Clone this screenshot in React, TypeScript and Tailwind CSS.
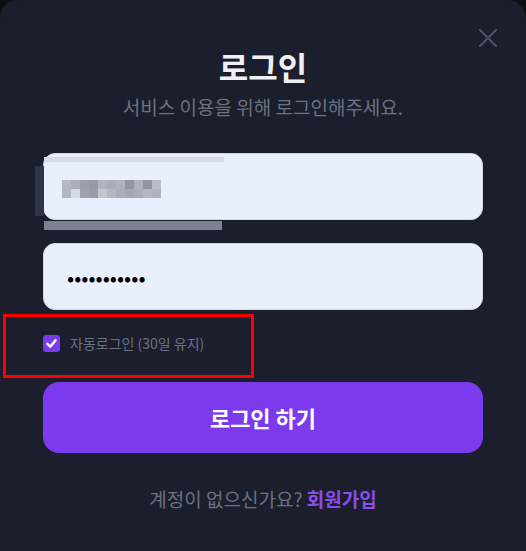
import React from "react";

const mosaic = [
  ["#b3b8c2", "#a9aeb8", "#9a9fa9", "#959aa4", "#aeb3bd", "#a9aeb8", "#aeb3bd", "#92969f", "#aeb3bd", "#92969f", "#b8bdc7"],
  ["#b3b8c2", "#d3d9e6", "#9da2ac", "#979ca6", "#c1c6d0", "#b3b8c2", "#a9aeb8", "#a4a9b3", "#a9aeb8", "#b3b8c2", "#aeb3bd"],
];

const App = () => {
  return (
    <div className="min-h-[551px] w-[526px] bg-[#0c0e14]" style={{ fontFamily: '"Noto Sans CJK KR", "Noto Sans", sans-serif' }}>
      <div className="relative min-h-[551px] rounded-t-[18px] bg-[#1b1f2d] px-[43px] pt-[46px]">
        {/* Close */}
        <button className="absolute right-[28px] top-[28px] text-[#4b5363]">
          <svg width="20" height="20" viewBox="0 0 20 20" fill="none" stroke="currentColor" strokeWidth="2.2" strokeLinecap="round">
            <path d="M2 2L18 18M18 2L2 18" />
          </svg>
        </button>

        <h1 className="text-center text-[32px] font-bold leading-10 text-[#eef0f4]">로그인</h1>
        <p className="mt-[9px] text-center text-[19px] leading-6 text-[#6b7180]">서비스 이용을 위해 로그인해주세요.</p>

        <div className="mt-[34px] flex flex-col gap-[23px]">
          <div className="relative">
            <input
              readOnly
              value=""
              className="h-[67px] w-full rounded-[12px] border border-[#cfd6e4] bg-[#e8f0fe] px-[23px] text-[16px] outline-none"
            />
            {/* redacted id */}
            <div className="pointer-events-none absolute left-[1px] top-[4px] h-[5px] w-[180px] bg-[#d5dbe8]" />
            <div className="pointer-events-none absolute left-[-8px] top-[13px] h-[50px] w-[9px] bg-[#2f3546]" />
            <div className="pointer-events-none absolute left-[1px] top-[68px] h-[9px] w-[178px] bg-[#7b8191]" />
            <div className="pointer-events-none absolute left-[19px] top-[27px] flex flex-col">
              {mosaic.map((row, r) => (
                <div key={r} className="flex">
                  {row.map((c, i) => (
                    <div key={i} className="h-[9px] w-[9px]" style={{ background: c }} />
                  ))}
                </div>
              ))}
            </div>
          </div>
          <input
            type="password"
            readOnly
            value="abcdefghijk"
            className="h-[67px] w-full rounded-[12px] border border-[#cfd6e4] bg-[#e8f0fe] px-[23px] text-[21px] text-black outline-none"
          />
        </div>

        <label className="mt-[23px] flex h-5 items-center gap-[10px]">
          <span className="flex h-[17px] w-[17px] items-center justify-center rounded-[3px] bg-[#7c3aed]">
            <svg width="13" height="13" viewBox="0 0 16 16" fill="none" stroke="white" strokeWidth="3" strokeLinecap="round" strokeLinejoin="round">
              <path d="M3 8.5L6.5 12L13 4" />
            </svg>
          </span>
          <span className="text-[14px] text-[#6b7180]">자동로그인 (30일 유지)</span>
        </label>

        <button className="mt-[29px] flex h-[71px] w-full items-center justify-center rounded-[16px] bg-[#7c3aed] text-[22px] font-bold text-white">
          로그인 하기
        </button>

        <p className="mt-[34px] text-center text-[19px] leading-6 text-[#6b7180]">
          계정이 없으신가요? <span className="font-bold text-[#8b4cf0]">회원가입</span>
        </p>

        {/* annotation */}
        <div className="pointer-events-none absolute left-[3px] top-[314px] h-[64px] w-[251px] border-[3px] border-[#ff0000]" />
      </div>
    </div>
  );
};

export default App;
